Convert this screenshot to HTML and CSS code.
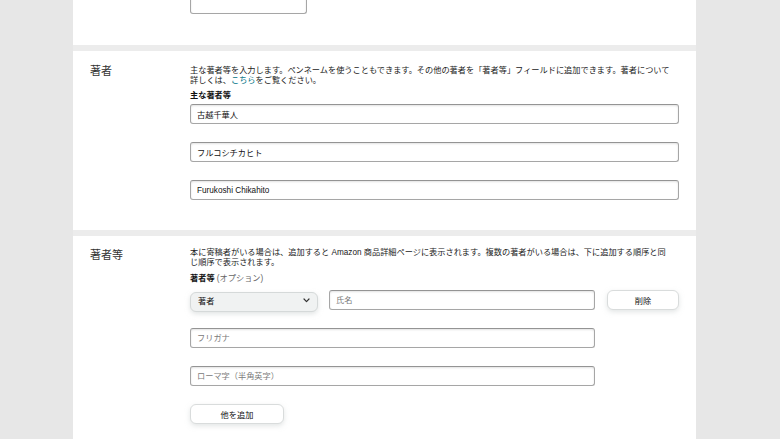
FILE: index.html
```html
<!DOCTYPE html>
<html lang="ja">
<head>
<meta charset="utf-8">
<title>著者</title>
<link rel="stylesheet" href="styles.css">
</head>
<body>
<main class="stack">
  <section class="card card--top">
    <input class="field field--partial" type="text" aria-label="入力">
  </section>

  <section class="card card--authors">
    <h2 class="card-title">著者</h2>
    <div class="card-body">
      <p class="desc">主な著者等を入力します。ペンネームを使うこともできます。その他の著者を「著者等」フィールドに追加できます。著者について詳しくは、<a class="link" href="#">こちら</a>をご覧ください。</p>
      <p class="label label--first">主な著者等</p>
      <div class="fields">
        <input class="field" type="text" value="古越千華人">
        <input class="field" type="text" value="フルコシチカヒト">
        <input class="field field--latin" type="text" value="Furukoshi Chikahito">
      </div>
    </div>
  </section>

  <section class="card card--contrib">
    <h2 class="card-title">著者等</h2>
    <div class="card-body">
      <p class="desc desc--narrow">本に寄稿者がいる場合は、追加すると Amazon 商品詳細ページに表示されます。複数の著者がいる場合は、下に追加する順序と同じ順序で表示されます。</p>
      <p class="label label--second">著者等 <span class="optional">(オプション)</span></p>
      <div class="fields">
        <div class="row">
          <div class="select-wrap">
            <select class="select" aria-label="役割">
              <option>著者</option>
            </select>
            <svg class="chevron" width="7" height="5" viewBox="0 0 7 5" aria-hidden="true"><path d="M1 1 L3.5 3.6 L6 1" fill="none" stroke="#333" stroke-width="1.2" stroke-linecap="round" stroke-linejoin="round"/></svg>
          </div>
          <input class="field field--name" type="text" placeholder="氏名">
          <button class="btn btn--delete" type="button">削除</button>
        </div>
        <input class="field field--mid" type="text" placeholder="フリガナ">
        <input class="field field--mid" type="text" placeholder="ローマ字（半角英字）">
        <button class="btn btn--add" type="button">他を追加</button>
      </div>
    </div>
  </section>
</main>
</body>
</html>
```

FILE: styles.css
```css
* { box-sizing: border-box; }

html, body {
  margin: 0;
  padding: 0;
  height: 100%;
  overflow: hidden;
}

body {
  background: #e7e7e7;
  font-family: "Liberation Sans", "Noto Sans CJK JP", sans-serif;
  color: #111;
}

.stack {
  margin-left: 73px;
  width: 623px;
  display: flex;
  flex-direction: column;
  gap: 6px;
  background: #ececec;
  min-height: 100%;
}

.card {
  background: #fff;
  display: grid;
  grid-template-columns: 100px 489px;
  padding: 0 17px;
}

.card--top {
  height: 45px;
  overflow: hidden;
  display: block;
  padding-left: 117px;
}

.card--authors {
  padding-top: 15px;
  padding-bottom: 30px;
}

.card--contrib {
  padding-top: 12px;
  padding-bottom: 40px;
}

.card-title {
  margin: -2px 0 0;
  font-size: 11px;
  line-height: 14px;
  font-weight: 400;
  color: #333;
}

.card--contrib .card-title {
  margin-top: 0;
}

.card-body {
  display: flex;
  flex-direction: column;
}

.desc {
  margin: 0;
  max-width: 485px;
  font-size: 8.2px;
  line-height: 10px;
  color: #222;
}

.desc--narrow {
  max-width: 480px;
}

.link {
  display: inline-block;
  line-height: 10px;
  color: #007185;
  text-decoration: none;
}

.label {
  margin: 0;
  font-size: 8.2px;
  line-height: 10px;
  font-weight: 700;
  color: #111;
}

.label--first { margin-top: 5px; }
.label--second { margin-top: 6px; }

.optional {
  font-weight: 400;
  color: #666;
}

.fields {
  display: flex;
  flex-direction: column;
  align-items: flex-start;
  gap: 18px;
  margin-top: 3px;
}

.label--second + .fields { margin-top: 6px; }

.field {
  display: block;
  width: 489px;
  height: 20px;
  margin: 0;
  padding: 0 6px;
  border: 1px solid #a6a6a6;
  border-top-color: #949494;
  border-radius: 3px;
  box-shadow: inset 0 1px 2px rgba(15, 17, 17, 0.12);
  background: #fff;
  font-family: "Liberation Sans", "Noto Sans CJK JP", sans-serif;
  font-size: 8.2px;
  color: #111;
  outline: none;
}

.field::placeholder { color: #7a7a7a; }

.field--partial {
  width: 117px;
  height: 30px;
  margin-top: -16px;
}

.field--mid { width: 405px; }

.row {
  display: flex;
  align-items: center;
  width: 489px;
  height: 20px;
}

.select-wrap {
  position: relative;
  width: 128px;
  height: 20px;
  flex: none;
}

.select {
  appearance: none;
  -webkit-appearance: none;
  width: 100%;
  height: 20px;
  margin: 0;
  padding: 0 0 0 7px;
  border: 1px solid #d5d9d9;
  border-radius: 6px;
  background: #f0f2f2;
  box-shadow: 0 2px 5px rgba(200, 205, 205, 0.55);
  font-family: "Liberation Sans", "Noto Sans CJK JP", sans-serif;
  font-size: 8.2px;
  color: #111;
  outline: none;
}

.chevron {
  position: absolute;
  right: 8px;
  top: 8px;
  pointer-events: none;
}

.field--name {
  width: 266px;
  margin-left: 11px;
}

.btn {
  height: 20px;
  margin: 0;
  padding: 0;
  border: 1px solid #d9dcdc;
  border-radius: 6px;
  background: #fff;
  box-shadow: 0 2px 5px rgba(200, 205, 205, 0.5);
  font-family: "Liberation Sans", "Noto Sans CJK JP", sans-serif;
  font-size: 8.2px;
  color: #111;
  cursor: pointer;
}

.btn--delete {
  width: 72px;
  margin-left: 12px;
}

.btn--add {
  width: 94px;
}
```
